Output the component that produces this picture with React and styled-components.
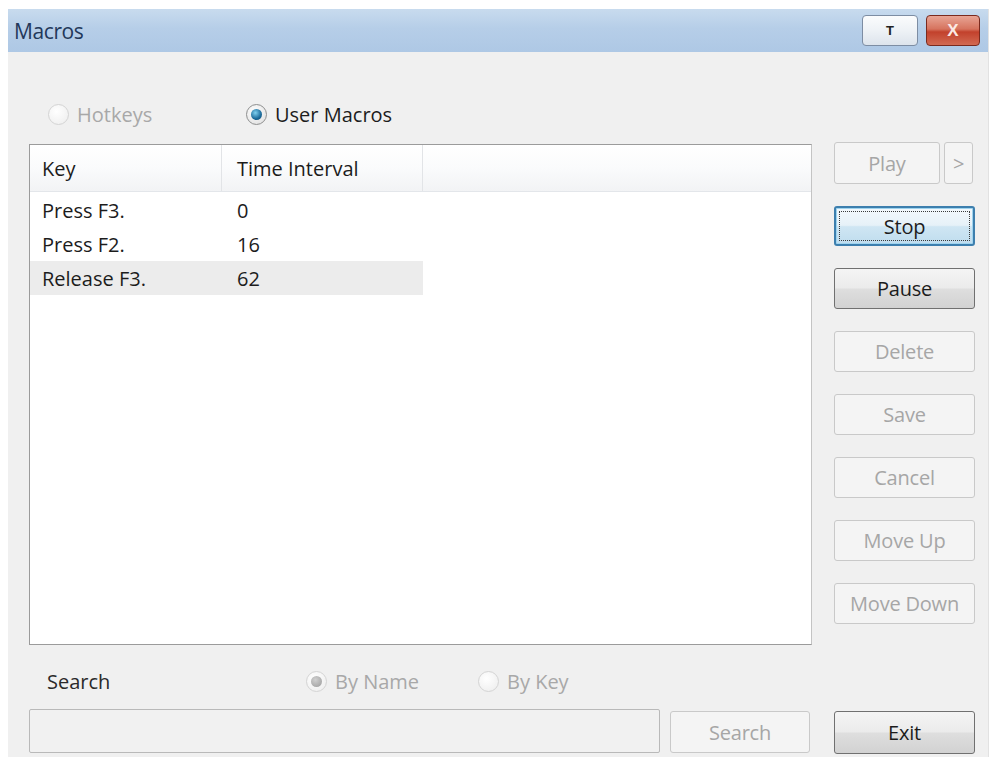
import styled, { createGlobalStyle, css } from 'styled-components';

const GlobalStyle = createGlobalStyle`
  html, body {
    margin: 0;
    padding: 0;
    background: #ffffff;
  }
  body {
    font-family: 'Open Sans', 'Noto Sans', 'DejaVu Sans', sans-serif;
    overflow: hidden;
  }
`;

const Window = styled.div`
  margin: 9px 0 0 8px;
  width: 980px;
  height: 748px;
  display: flex;
  flex-direction: column;
  background: #f0f0f0;
  border-right: 1px solid #e2e2e2;
  overflow: hidden;
`;

const TitleBar = styled.div`
  height: 43px;
  flex-shrink: 0;
  display: flex;
  align-items: center;
  padding: 0 8px 0 6px;
  background: linear-gradient(to bottom, #c8dbee 0%, #b6cee8 45%, #aec8e5 100%);
`;

const Title = styled.span`
  flex: 1;
  font-size: 21px;
  color: #23385a;
  letter-spacing: -0.4px;
`;

const CaptionButton = styled.div`
  height: 29px;
  display: flex;
  align-items: center;
  justify-content: center;
  border-radius: 4px;
  font-family: 'Liberation Sans', Arial, sans-serif;
  font-weight: 700;
  ${(p) =>
    p.$close
      ? css`
          width: 52px;
          margin-left: 8px;
          border: 1px solid #7a2a1e;
          background: linear-gradient(to bottom, #e8a595 0%, #d6735e 45%, #c2412c 55%, #d26a52 100%);
          color: #fbe9e4;
          font-size: 17px;
        `
      : css`
          width: 54px;
          border: 1px solid #7d8da3;
          background: linear-gradient(to bottom, #fbfcfd 0%, #eef2f6 50%, #dde4ec 100%);
          color: #222;
          font-size: 13px;
        `}
`;

const Body = styled.div`
  flex: 1;
  display: flex;
  flex-direction: column;
  padding: 47px 12px 0 21px;
`;

const RadioRow = styled.div`
  height: 30px;
  display: flex;
  align-items: center;
  padding-left: 19px;
`;

const RadioOption = styled.label`
  display: flex;
  align-items: center;
  gap: 8px;
  font-size: 20px;
  color: ${(p) => (p.$disabled ? '#a8a8a8' : '#1c1c1c')};
  ${(p) => p.$width && `width: ${p.$width}px;`}
`;

const RadioCircle = styled.span`
  width: 21px;
  height: 21px;
  border-radius: 50%;
  box-sizing: border-box;
  display: flex;
  align-items: center;
  justify-content: center;
  border: 1px solid ${(p) => (p.$disabled ? '#d4d4d4' : '#8e8f8f')};
  background: ${(p) =>
    p.$disabled
      ? 'radial-gradient(circle at 40% 35%, #ffffff, #ececec)'
      : 'radial-gradient(circle at 40% 35%, #ffffff, #dcdcdc)'};

  &::after {
    content: '';
    display: ${(p) => (p.$checked ? 'block' : 'none')};
    width: 11px;
    height: 11px;
    border-radius: 50%;
    background: ${(p) =>
      p.$disabled
        ? 'radial-gradient(circle at 40% 35%, #d0d0d0, #9b9b9b)'
        : 'radial-gradient(circle at 40% 35%, #7fd0f0, #1b6a9a 60%, #104a70)'};
  }
`;

const Main = styled.div`
  margin-top: 15px;
  display: grid;
  grid-template-columns: 783px 141px;
  column-gap: 22px;
  height: 501px;
`;

const ListBox = styled.div`
  border: 1px solid #9b9b9b;
  border-right-color: #c4c4c4;
  background: #ffffff;
  display: flex;
  flex-direction: column;
`;

const Columns = styled.div`
  display: grid;
  grid-template-columns: 192px 201px 1fr;
  align-items: center;
  ${(p) =>
    p.$selected &&
    css`
      background: linear-gradient(to right, #ececec 0, #ececec 393px, transparent 393px);
    `}
`;

const HeaderRow = styled(Columns)`
  height: 46px;
  border-bottom: 1px solid #e3e6ea;
  background: linear-gradient(to bottom, #ffffff 0%, #fafbfc 50%, #f2f3f5 100%);
`;

const HeaderCell = styled.div`
  height: 100%;
  display: flex;
  align-items: center;
  padding-left: ${(p) => p.$pad}px;
  border-right: ${(p) => (p.$last ? 'none' : '1px solid #e2e4e7')};
  font-size: 20px;
  color: #1c1c1c;
`;

const Rows = styled.div`
  padding-top: 1px;
`;

const DataRow = styled(Columns)`
  height: 34px;
`;

const Cell = styled.div`
  padding-left: ${(p) => p.$pad}px;
  font-size: 20px;
  color: #1c1c1c;
`;

const ButtonColumn = styled.div`
  display: flex;
  flex-direction: column;
  gap: 22px;
  margin-top: -2px;
`;

const PlayRow = styled.div`
  display: flex;
  gap: 4px;
  width: 139px;
`;

const Button = styled.div`
  box-sizing: border-box;
  height: ${(p) => p.$h || 41}px;
  width: ${(p) => (p.$w ? `${p.$w}px` : '100%')};
  flex-shrink: 0;
  display: flex;
  align-items: center;
  justify-content: center;
  border-radius: 3px;
  font-size: 20px;
  letter-spacing: -0.2px;
  position: relative;
  ${(p) => {
    if (p.$variant === 'disabled')
      return css`
        border: 1px solid #c9c9c9;
        background: #f4f4f4;
        color: #a6a6a6;
      `;
    if (p.$variant === 'default')
      return css`
        border: 2px solid #3d7fae;
        background: linear-gradient(to bottom, #f4f9fc 0%, #e6f1f8 48%, #cfe6f3 52%, #bfdcee 100%);
        box-shadow: inset 0 0 0 1px #9fd4ef;
        color: #1c1c1c;
        &::before {
          content: '';
          position: absolute;
          inset: 3px;
          border: 1px dotted #3a3a3a;
          border-radius: 1px;
        }
      `;
    return css`
      border: 1px solid #707070;
      background: linear-gradient(to bottom, #f4f4f4 0%, #ebebeb 48%, #dedede 52%, #d2d2d2 100%);
      color: #1c1c1c;
    `;
  }}
`;

const SearchRow = styled.div`
  height: 36px;
  margin-top: 18px;
  display: flex;
  align-items: center;
  padding-left: 18px;
`;

const Label = styled.span`
  width: 259px;
  font-size: 20px;
  color: #2a2a2a;
`;

const BottomRow = styled.div`
  margin-top: 10px;
  display: flex;
  align-items: flex-start;
`;

const SearchInput = styled.div`
  width: 631px;
  height: 44px;
  box-sizing: border-box;
  border: 1px solid #b9b9b9;
  border-radius: 2px;
  background: #f1f1f1;
`;

const buttons = ['Delete', 'Save', 'Cancel', 'Move Up', 'Move Down'];

const events = [
  { key: 'Press F3.', time: '0' },
  { key: 'Press F2.', time: '16' },
  { key: 'Release F3.', time: '62', selected: true },
];

function Radio({ label, checked, disabled, width }) {
  return (
    <RadioOption $disabled={disabled} $width={width}>
      <RadioCircle $checked={checked} $disabled={disabled} />
      {label}
    </RadioOption>
  );
}

export default function App() {
  return (
    <>
      <GlobalStyle />
      <Window>
        <TitleBar>
          <Title>Macros</Title>
          <CaptionButton>T</CaptionButton>
          <CaptionButton $close>X</CaptionButton>
        </TitleBar>
        <Body>
          <RadioRow>
            <Radio label="Hotkeys" disabled width={198} />
            <Radio label="User Macros" checked />
          </RadioRow>

          <Main>
            <ListBox>
              <HeaderRow>
                <HeaderCell $pad={12}>Key</HeaderCell>
                <HeaderCell $pad={15}>Time Interval</HeaderCell>
                <HeaderCell $last />
              </HeaderRow>
              <Rows>
                {events.map((ev) => (
                  <DataRow key={ev.key} $selected={ev.selected}>
                    <Cell $pad={12}>{ev.key}</Cell>
                    <Cell $pad={15}>{ev.time}</Cell>
                    <Cell />
                  </DataRow>
                ))}
              </Rows>
            </ListBox>

            <ButtonColumn>
              <PlayRow>
                <Button $variant="disabled" $w={106} $h={42}>Play</Button>
                <Button $variant="disabled" $w={29} $h={42}>&gt;</Button>
              </PlayRow>
              <Button $variant="default" $h={40}>Stop</Button>
              <Button>Pause</Button>
              {buttons.map((b) => (
                <Button key={b} $variant="disabled">{b}</Button>
              ))}
            </ButtonColumn>
          </Main>

          <SearchRow>
            <Label>Search</Label>
            <Radio label="By Name" checked disabled width={172} />
            <Radio label="By Key" disabled />
          </SearchRow>

          <BottomRow>
            <SearchInput />
            <Button $variant="disabled" $w={140} $h={42} style={{ marginLeft: 10, marginTop: 2 }}>
              Search
            </Button>
            <Button $w={141} $h={43} style={{ marginLeft: 24, marginTop: 2 }}>
              Exit
            </Button>
          </BottomRow>
        </Body>
      </Window>
    </>
  );
}
